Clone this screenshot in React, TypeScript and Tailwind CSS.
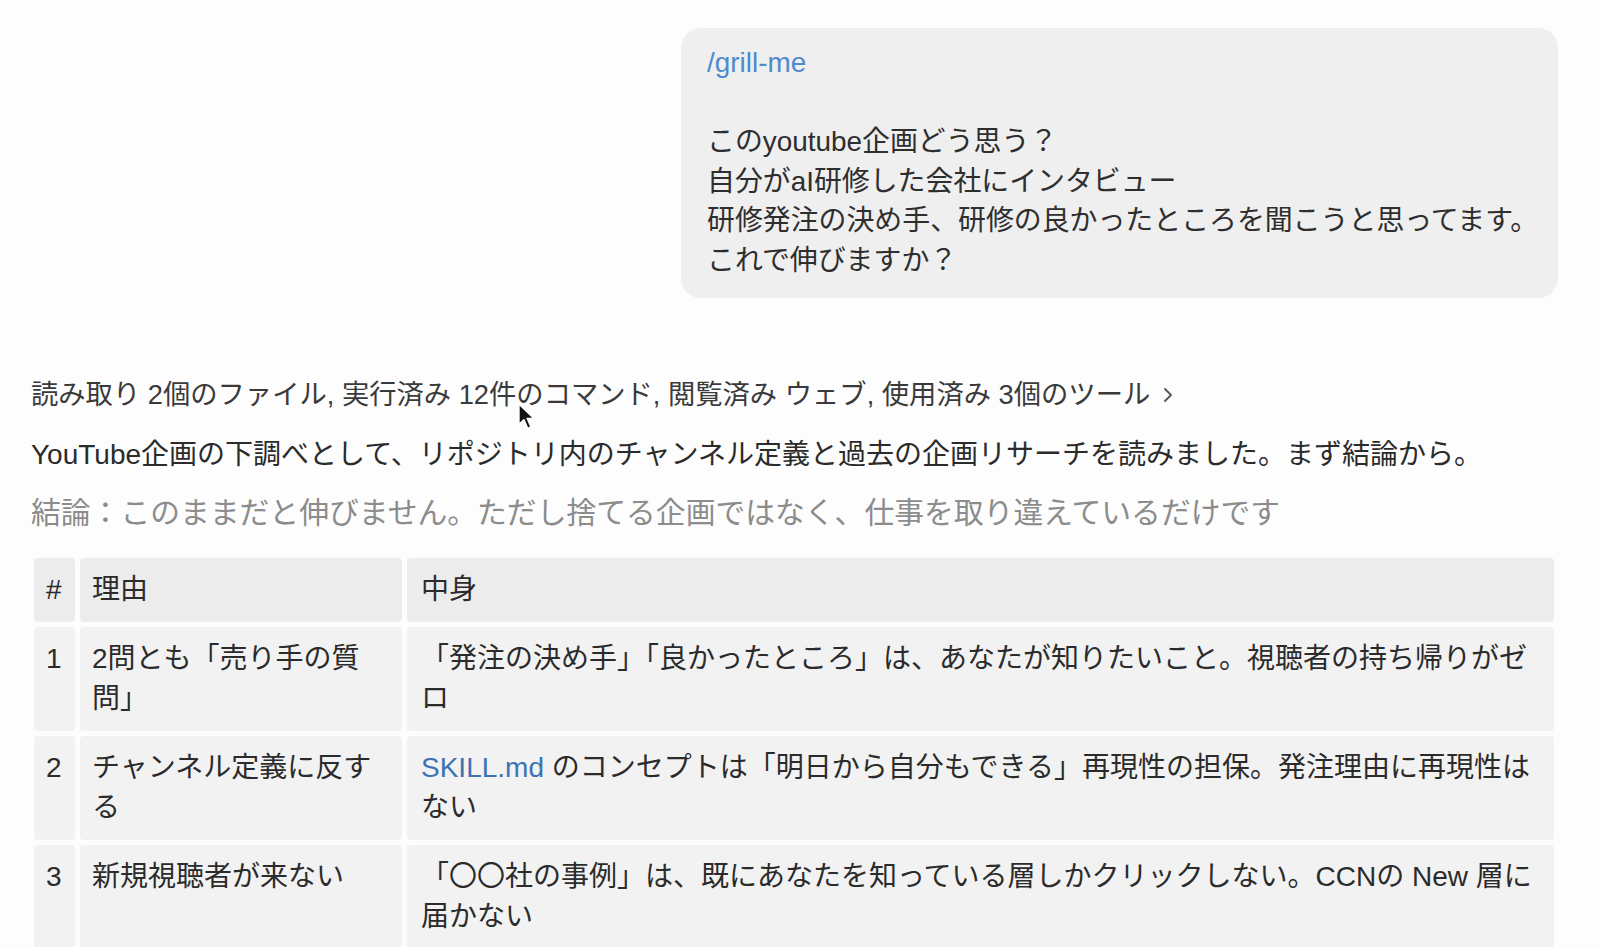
import { ChevronRight } from "lucide-react";

const font = "font-['Liberation_Sans','Noto_Sans_CJK_JP',sans-serif]";

type Row = { n: string; reason: string; body: React.ReactNode };

const rows: Row[] = [
  {
    n: "1",
    reason: "2問とも「売り手の質問」",
    body: (
      <>
        「発注の決め手」「良かったところ」は、あなたが知りたいこと。視聴者の持ち帰りがゼ
        <br />ロ
      </>
    ),
  },
  {
    n: "2",
    reason: "チャンネル定義に反する",
    body: (
      <>
        <span className="text-[#3d73b3]">SKILL.md</span> のコンセプトは「明日から自分もできる」再現性の担保。発注理由に再現性は
        <br />ない
      </>
    ),
  },
  {
    n: "3",
    reason: "新規視聴者が来ない",
    body: (
      <>
        「〇〇社の事例」は、既にあなたを知っている層しかクリックしない。CCNの New 層に
        <br />届かない
      </>
    ),
  },
];

function Cursor() {
  return (
    <svg
      className="pointer-events-none absolute left-[517px] top-[402px]"
      width="20"
      height="30"
      viewBox="0 0 16 24"
    >
      <path
        d="M1.5 1.5 L1.5 18 L5.5 14.2 L8.6 21.2 L11.2 20 L8.2 13.2 L13.6 13.2 Z"
        fill="#111"
        stroke="#fff"
        strokeWidth="1.3"
        strokeLinejoin="round"
      />
    </svg>
  );
}

export default function App() {
  return (
    <div className={`relative min-h-screen overflow-hidden bg-[#fdfdfd] text-[#2b2b2b] ${font}`}>
      {/* User message */}
      <div className="flex justify-end pt-[28px] pr-[42px]">
        <div className="w-[877px] whitespace-nowrap rounded-[20px] bg-[#efefef] pl-[26px] pr-3 pt-[15px] pb-[17px] text-[27.9px] leading-[39.6px] text-[#2e2e2e]">
          <div className="text-[#5089cc]">/grill-me</div>
          <div>&nbsp;</div>
          <div>このyoutube企画どう思う？</div>
          <div>自分がaI研修した会社にインタビュー</div>
          <div>研修発注の決め手、研修の良かったところを聞こうと思ってます。</div>
          <div>これで伸びますか？</div>
        </div>
      </div>

      {/* Assistant reply */}
      <div className="pl-[31px] pr-[46px] pt-[77px]">
        <div className="flex items-center text-[27.3px] leading-[40px] text-[#3a3a3a]">
          <span>読み取り 2個のファイル, 実行済み 12件のコマンド, 閲覧済み ウェブ, 使用済み 3個のツール</span>
          <ChevronRight className="ml-1.5 h-6 w-6 text-[#555]" strokeWidth={1.8} />
        </div>
        <p className="mt-[20px] text-[28px] leading-[40px]">
          YouTube企画の下調べとして、リポジトリ内のチャンネル定義と過去の企画リサーチを読みました。まず結論から。
        </p>
        <p className="mt-[18px] text-[29.8px] leading-[40px] text-[#8c8c8c]">
          結論：このままだと伸びません。ただし捨てる企画ではなく、仕事を取り違えているだけです
        </p>

        <div className="ml-[3px] mt-[25px] grid grid-cols-[41px_322px_1fr] gap-[5px] text-[28px] leading-[40px]">
          <div className="rounded-[4px] bg-[#ececec] px-3 py-3">#</div>
          <div className="rounded-[4px] bg-[#ececec] px-3 py-3">理由</div>
          <div className="rounded-[4px] bg-[#ececec] px-3.5 py-3">中身</div>
          {rows.map((r) => (
            <div key={r.n} className="contents">
              <div className="rounded-[4px] bg-[#f2f2f2] px-3 py-3">{r.n}</div>
              <div className="rounded-[4px] bg-[#f2f2f2] px-3 py-3">{r.reason}</div>
              <div className="rounded-[4px] bg-[#f2f2f2] pl-3.5 pr-2 py-3">{r.body}</div>
            </div>
          ))}
        </div>
      </div>

      <Cursor />
    </div>
  );
}
